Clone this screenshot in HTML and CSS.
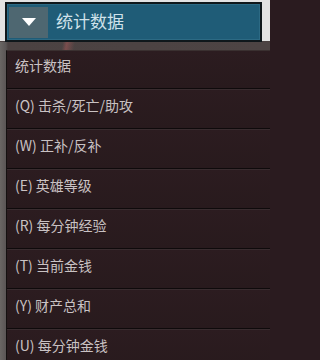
FILE: index.html
```html
<!DOCTYPE html>
<html lang="zh">
<head>
<meta charset="utf-8">
<link rel="stylesheet" href="styles.css">
</head>
<body>
<div class="header">
  <div class="btn">
    <svg width="14" height="8" viewBox="0 0 14 8"><polygon points="0,0 14,0 7,8" fill="#ffffff"/></svg>
  </div>
  <div class="title">统计数据</div>
</div>
<div class="stage">
  <ul class="list">
    <li class="row first">统计数据</li>
    <li class="row">(Q) 击杀/死亡/助攻</li>
    <li class="row">(W) 正补/反补</li>
    <li class="row">(E) 英雄等级</li>
    <li class="row">(R) 每分钟经验</li>
    <li class="row">(T) 当前金钱</li>
    <li class="row">(Y) 财产总和</li>
    <li class="row">(U) 每分钟金钱</li>
  </ul>
</div>
</body>
</html>
```
FILE: styles.css
```css
html, body {
  margin: 0;
  padding: 0;
}
html {
  background: #2a1b1f;
}
body {
  width: 270px;
  height: 360px;
  overflow: hidden;
  background: linear-gradient(to bottom, #e2e2e2 0, #e2e2e2 41px, #4a4040 41px);
  font-family: "Noto Sans CJK SC", "Noto Sans", sans-serif;
}
.header {
  box-sizing: border-box;
  margin: 2px 8px 0 5px;
  height: 40px;
  background: #1f5c77;
  border: 2px solid #0f171b;
  box-shadow: inset 0 0 0 1px #2c6a84;
  display: flex;
  align-items: center;
  padding-left: 2px;
}
.btn {
  width: 39px;
  height: 31px;
  background: #4e6771;
  display: flex;
  align-items: center;
  justify-content: center;
}
.title {
  margin-left: 8px;
  font-size: 17px;
  color: #d0e2ea;
  line-height: 20px;
  margin-top: -2px;
}
.stage {
  padding-top: 8px;
  height: 320px;
  background:
    linear-gradient(100deg, transparent 0, transparent 62px, rgba(180, 90, 90, 0.45) 66px, transparent 74px, transparent 100%),
    linear-gradient(to right, #6a6664 0, #5a5555 6px, #4b4242 8px, #4d4444 100%);
}
.list {
  list-style: none;
  margin: 0 0 0 6px;
  padding: 0;
  background: #2a1a1e;
  border-left: 1px solid #141010;
  border-top: 1px solid #3a3030;
}
.row {
  box-sizing: border-box;
  height: 40px;
  padding: 6px 0 0 8px;
  font-size: 14px;
  line-height: 20px;
  color: #c9c2c3;
  border-bottom: 1px solid #0e0a0b;
  box-shadow: inset 0 1px 0 #392c2f;
  background: linear-gradient(to bottom, #2c1c20, #281a1d);
}
.row.first {
  height: 38px;
  padding-top: 4px;
  box-shadow: none;
}
```
